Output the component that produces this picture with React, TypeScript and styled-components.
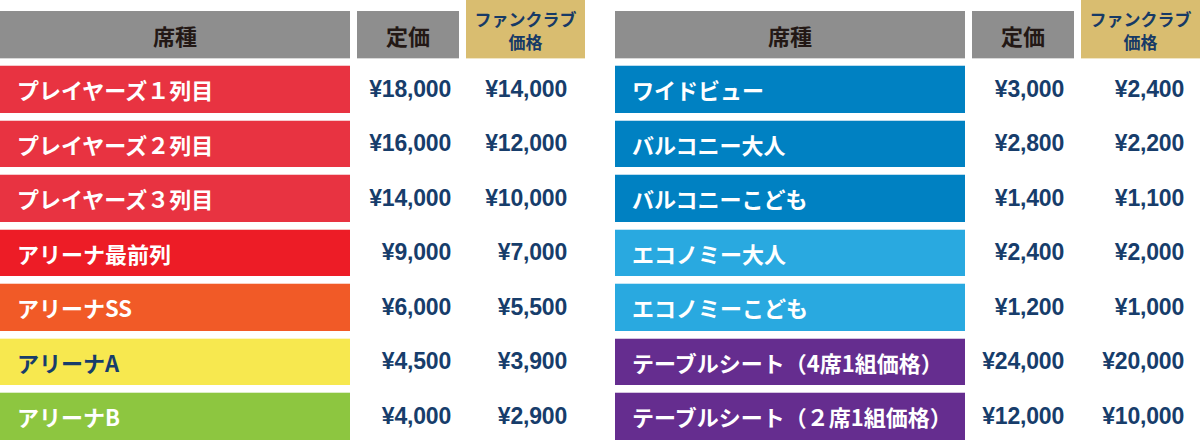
import styled, { createGlobalStyle } from "styled-components"

const GlobalStyle = createGlobalStyle`
  html, body {
    margin: 0;
    padding: 0;
    background: #ffffff;
  }
  body {
    font-family: "Noto Sans CJK JP", "Noto Sans", sans-serif;
  }
`

const Page = styled.div`
  width: 1200px;
  height: 440px;
  display: flex;
  gap: 30px;
  overflow: hidden;
`

const Table = styled.div`
  width: 585px;
  display: grid;
  grid-template-columns: 350px 102px 119px;
  grid-template-rows: 58px repeat(7, 46.5px);
  column-gap: 7px;
  row-gap: 8px;
`

const HeadCell = styled.div`
  align-self: end;
  height: 47px;
  background: #8e8e8e;
  box-shadow: 0 1px 0 #d8d8d8;
  color: #231815;
  font-size: 22px;
  font-weight: 700;
  display: flex;
  align-items: center;
  justify-content: center;
`

const ClubHead = styled.div`
  background: #d9bd70;
  box-shadow: 0 1px 0 #f1e6c6;
  color: #173a66;
  font-size: 17px;
  line-height: 23px;
  font-weight: 700;
  display: flex;
  flex-direction: column;
  align-items: center;
  justify-content: center;
  text-align: center;
  padding-top: 1px;
`

interface SeatProps {
  $bg: string
  $edge: string
  $color?: string
}

const SeatCell = styled.div<SeatProps>`
  background: ${(props) => props.$bg};
  box-shadow: 0 -1px 0 ${(props) => props.$edge};
  color: ${(props) => props.$color || "#ffffff"};
  font-size: 22px;
  font-weight: 700;
  display: flex;
  align-items: center;
  padding-left: 17px;
  white-space: nowrap;
`

const PriceCell = styled.div<{ $pad: number }>`
  display: flex;
  align-items: center;
  justify-content: flex-end;
  padding-right: ${(props) => props.$pad}px;
  color: #173d6b;
  font-family: "Liberation Sans", "Noto Sans CJK JP", sans-serif;
  font-size: 23px;
  font-weight: 700;
  letter-spacing: -0.2px;
`

interface ISeat {
  name: string
  price: string
  club: string
  bg: string
  edge: string
  color?: string
}

const leftSeats: ISeat[] = [
  { name: "プレイヤーズ１列目", price: "¥18,000", club: "¥14,000", bg: "#e83341", edge: "#f6c9cc" },
  { name: "プレイヤーズ２列目", price: "¥16,000", club: "¥12,000", bg: "#e83341", edge: "#f6c9cc" },
  { name: "プレイヤーズ３列目", price: "¥14,000", club: "¥10,000", bg: "#e83341", edge: "#f6c9cc" },
  { name: "アリーナ最前列", price: "¥9,000", club: "¥7,000", bg: "#ed1c26", edge: "#f8c3c4" },
  { name: "アリーナSS", price: "¥6,000", club: "¥5,500", bg: "#f15a27", edge: "#fbd1c2" },
  { name: "アリーナA", price: "¥4,500", club: "¥3,900", bg: "#f7e84f", edge: "#fcf6c8", color: "#173d6b" },
  { name: "アリーナB", price: "¥4,000", club: "¥2,900", bg: "#8dc640", edge: "#dcedc7" },
]

const rightSeats: ISeat[] = [
  { name: "ワイドビュー", price: "¥3,000", club: "¥2,400", bg: "#0081c2", edge: "#bcdcee" },
  { name: "バルコニー大人", price: "¥2,800", club: "¥2,200", bg: "#0081c2", edge: "#bcdcee" },
  { name: "バルコニーこども", price: "¥1,400", club: "¥1,100", bg: "#0081c2", edge: "#bcdcee" },
  { name: "エコノミー大人", price: "¥2,400", club: "¥2,000", bg: "#29a9e0", edge: "#c3e6f6" },
  { name: "エコノミーこども", price: "¥1,200", club: "¥1,000", bg: "#29a9e0", edge: "#c3e6f6" },
  { name: "テーブルシート（4席1組価格）", price: "¥24,000", club: "¥20,000", bg: "#652d8f", edge: "#d4c4e0" },
  { name: "テーブルシート（２席1組価格）", price: "¥12,000", club: "¥10,000", bg: "#652d8f", edge: "#d4c4e0" },
]

const PriceTable = ({ seats, pad }: { seats: ISeat[]; pad: [number, number] }) => (
  <Table>
    <HeadCell>席種</HeadCell>
    <HeadCell>定価</HeadCell>
    <ClubHead>
      <span>ファンクラブ</span>
      <span>価格</span>
    </ClubHead>
    {seats.map((seat) => [
      <SeatCell key={`${seat.name}-name`} $bg={seat.bg} $edge={seat.edge} $color={seat.color}>
        {seat.name}
      </SeatCell>,
      <PriceCell key={`${seat.name}-price`} $pad={pad[0]}>
        {seat.price}
      </PriceCell>,
      <PriceCell key={`${seat.name}-club`} $pad={pad[1]}>
        {seat.club}
      </PriceCell>,
    ])}
  </Table>
)

export default function App() {
  return (
    <>
      <GlobalStyle />
      <Page>
        <PriceTable seats={leftSeats} pad={[8, 18]} />
        <PriceTable seats={rightSeats} pad={[10, 16]} />
      </Page>
    </>
  )
}
